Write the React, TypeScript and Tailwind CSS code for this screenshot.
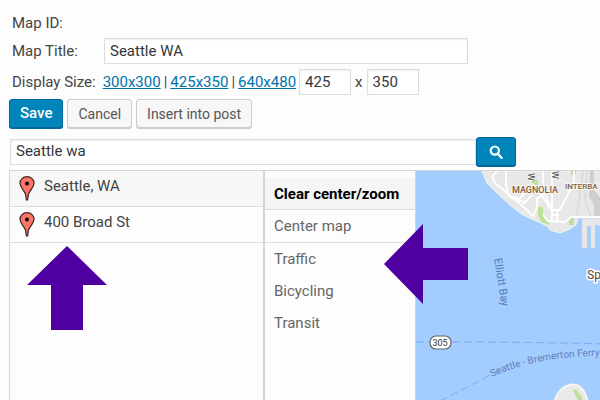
import React from 'react';

const sizes = ['300x300', '425x350', '640x480'];
const markers = ['Seattle, WA', '400 Broad St'];
const layers = ['Traffic', 'Bicycling', 'Transit'];

const inputClass = 'h-[26px] border border-[#dddddd] bg-white px-[5px] pb-px text-[#32373c] shadow-[inset_0_1px_2px_rgba(0,0,0,0.07)] outline-none';
const buttonClass = 'h-[29px] rounded-[3px] border px-2.5 text-[14px] leading-none shadow-[0_1px_0_#cccccc] border-[#cccccc] bg-[#f7f7f7] text-[#555555]';

const MarkerPin: React.FC = () => (
  <svg width="16" height="25" viewBox="0 0 16 25" className="shrink-0">
    <path d="M8 .7C3.900.7 1 3.700 1 7.300c0 4 4 6.700 5.500 10.700L7.400 24h1.200l.9-6C11 14 15 11.300 15 7.300 15 3.700 12.100.7 8 .7Z" fill="#fd7567" stroke="#3b2320" strokeWidth="1.200" />
    <circle cx="8" cy="7.500" r="2" fill="#000" />
  </svg>
);

const SearchIcon: React.FC = () => (
  <svg width="14" height="14" viewBox="0 0 14 14" fill="none" stroke="#fff">
    <circle cx="5.800" cy="5.600" r="4.100" strokeWidth="2.200" />
    <path d="M8.800 8.800l3.700 4" strokeWidth="2.400" strokeLinecap="round" />
  </svg>
);

const MapCanvas: React.FC = () => (
  <div className="relative min-w-0 grow overflow-hidden bg-[#a3ccff]">
    <svg className="absolute inset-0 h-full w-full font-[Roboto,sans-serif]">
      {/* Land */}
      <path d="M66 0l5 12 10 10 13 12 13 10 20 9 5 3 2 3 10 3 8-3 8-5 2-7h500V0Z" fill="#e8e8e8" stroke="#f5f2ea" strokeWidth="1" />
      <path d="M174 0h4v19l8 10v17h-8V34l-5-8Z" fill="#cfcfcf" />
      <path d="M167 0l-6 44M171 0l-2 30 6 16" fill="none" stroke="#dcdcdc" strokeWidth="2" />

      {/* Parks */}
      <path d="M116 9h6v5h-6ZM155 0h5v4h-5ZM122 36h5v9l6 5v4l-8-3-3-7ZM153 47h5v7h-5Z" fill="#bfe197" />

      {/* Streets */}
      <g fill="none" stroke="#fff" strokeWidth="1.800">
        <path d="M81 0l-5 6 4 7 22 18 9 8 6 6 4-8v-9l6-5V0" />
        <path d="M90 0v14l3 11 8 5 17-17M98 25l10 7 8-8" />
        <path d="M119 14l17 26M126 17l10 22M136 0v40M143 40l15-28V0" />
        <path d="M127 44l5 6 17 1 6-5h35M136 39v12M141 39v12M135 39h9M135 44h8" />
      </g>

      {/* Piers */}
      <path d="M166 48h18v6h-5v23h-4V55h-4v22h-5ZM183 48h14v6h-5v23h-8V55h-1Z" fill="#e8e8e8" stroke="#dcdfe4" strokeWidth=".5" />

      {/* Ferry routes */}
      <g fill="none" stroke="#81a9ef" strokeWidth="1" strokeDasharray="8 4">
        <path d="M0 171h15M36 171q75 0 160 2" />
        <path d="M24 230Q50 217 76 203" />
      </g>

      <path id="ferry" d="M76 206Q121 185 184 185H420" fill="none" />
      <text fontSize="10" fill="#6481b9"><textPath href="#ferry">Seattle - Bremerton Ferry</textPath></text>
      <path id="bay" d="M78 88Q82 111 87 144" fill="none" />
      <text fontSize="11" fill="#507ab5"><textPath href="#bay">Elliott Bay</textPath></text>

      <g fontWeight="500" fill="#806040" stroke="#f8f5f0" strokeWidth="2" paintOrder="stroke">
        <text x="96" y="22" fontSize="9">MAGNOLIA</text>
        <text x="149" y="18" fontSize="8">INTERBA</text>
      </g>
      <g fontSize="9" fontWeight="500" fill="#555" stroke="#fff" strokeWidth="1" paintOrder="stroke">
        <text transform="translate(112 2) rotate(90)">W</text>
        <text transform="translate(136 0) rotate(90)">W</text>
      </g>
      <text x="171" y="108" fontSize="12" fill="#59483b" stroke="#fff" strokeWidth="3" paintOrder="stroke">Sp</text>

      {/* Route shield */}
      <rect x="14" y="165" width="21" height="13" rx="6" fill="#fff" stroke="#666" strokeWidth="1.200" />
      <text x="24" y="175" fontSize="9" textAnchor="middle" fill="#333">305</text>

      {/* Island */}
      <path d="M138 232q3-11 9-15 9-6 16-2 7 5 9 17Z" fill="#e9e9e9" stroke="#f8f5ed" strokeWidth="2" />
      <path d="M157 219l3-1 6 8 1 6h-4Z" fill="#bfe197" />
    </svg>
  </div>
);

const App: React.FC = () => {
  return (
    <div className="relative flex min-h-screen flex-col overflow-hidden bg-[#fdfdfd] pt-[11px] pl-[9px] font-[Roboto,sans-serif] text-[15px] leading-6 text-[#444444]">
      {/* Map settings */}
      <div className="px-[3px]">Map ID:</div>
      <div className="mt-[3px] flex items-center px-[3px]">
        <label htmlFor="title" className="w-[92px] shrink-0">Map Title:</label>
        <input id="title" defaultValue="Seattle WA" className={`${inputClass} w-full max-w-[364px]`} />
      </div>
      <div className="mt-[5px] flex items-center px-[3px]">
        <span className="mr-[7px]">Display Size:</span>
        {sizes.map((size, i) => (
          <React.Fragment key={size}>
            {i > 0 && <span className="px-[3px]">|</span>}
            <a href={`#${size}`} className="text-[#0073aa] underline">{size}</a>
          </React.Fragment>
        ))}
        <input aria-label="Width" defaultValue="425" className={`${inputClass} ml-[3px] w-[52px]`} />
        <span className="px-1">x</span>
        <input aria-label="Height" defaultValue="350" className={`${inputClass} w-[52px]`} />
      </div>

      {/* Actions */}
      <div className="mt-1 flex gap-1">
        <button className="h-[29px] rounded-[3px] border border-[#006799] bg-[#0085ba] px-2.5 text-[15px] leading-none font-medium text-white shadow-[0_1px_0_#006799]">Save</button>
        <button className={buttonClass}>Cancel</button>
        <button className={buttonClass}>Insert into post</button>
      </div>

      {/* Search */}
      <form className="mt-[9px] flex max-w-[507px] items-center" onSubmit={(e) => e.preventDefault()}>
        <input aria-label="Search location" defaultValue="Seattle wa" className={`${inputClass} ml-px min-w-0 grow`} />
        <button aria-label="Search" className="flex h-[29px] w-10 items-center justify-center rounded-[3px] border border-[#006799] bg-[#0085ba] shadow-[0_1px_0_#006799]">
          <SearchIcon />
        </button>
      </form>

      <div className="mt-1 flex grow border-t border-l border-[#d5d5d5]">
        {/* Markers */}
        <ul className="w-[253px] shrink-0">
          {markers.map((marker, i) => (
            <li key={marker} className={`flex h-9 items-center gap-[9px] border-b border-[#dddddd] pl-[9px] ${i === 0 ? 'bg-[#f7f7f7]' : ''}`}>
              <MarkerPin />
              <span className="pb-1.5">{marker}</span>
            </li>
          ))}
        </ul>

        {/* Map options */}
        <div className="flex w-[153px] shrink-0 flex-col items-stretch border-r border-l-2 border-[#d5d5d5] pt-[7px] text-[#666666]">
          <button className="h-8 border-b border-[#dddddd] bg-[#f5f5f5] pl-[9px] text-left font-bold text-black">Clear center/zoom</button>
          <button className="h-[33px] border-b border-[#dddddd] pl-[9px] text-left">Center map</button>
          {layers.map((layer) => (
            <button key={layer} className="h-8 pl-[9px] text-left">{layer}</button>
          ))}
        </div>

        <MapCanvas />
      </div>

      {/* Callout arrows */}
      <svg width="80" height="84" viewBox="0 0 80 84" className="absolute top-[246px] left-[27px]">
        <path d="M40 0l40 39H56v45H24V39H0Z" fill="#5000a0" />
      </svg>
      <svg width="84" height="80" viewBox="0 0 84 80" className="absolute top-[224px] left-[384px]">
        <path d="M0 40L39 0v24h45v32H39v24Z" fill="#5000a0" />
      </svg>
    </div>
  );
};

export default App;
